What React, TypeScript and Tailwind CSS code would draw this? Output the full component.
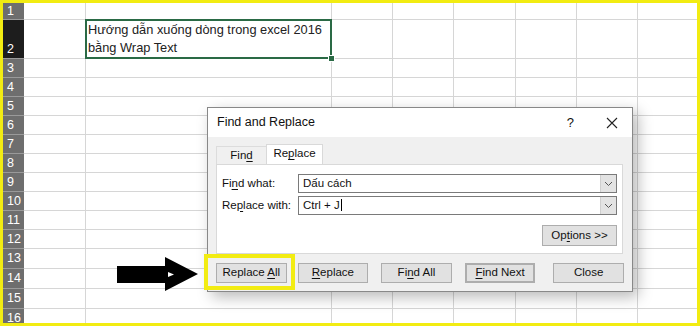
import React from "react";

const rows = [
  { n: 1, h: "h-[17px]" },
  { n: 2, h: "h-[39px]" },
  { n: 3, h: "h-[19px]" },
  { n: 4, h: "h-[19px]" },
  { n: 5, h: "h-[19px]" },
  { n: 6, h: "h-[19px]" },
  { n: 7, h: "h-[19px]" },
  { n: 8, h: "h-[19px]" },
  { n: 9, h: "h-[19px]" },
  { n: 10, h: "h-[19px]" },
  { n: 11, h: "h-[19px]" },
  { n: 12, h: "h-[19px]" },
  { n: 13, h: "h-[20px]" },
  { n: 14, h: "h-[20px]" },
  { n: 15, h: "h-[20px]" },
  { n: 16, h: "h-[20px]" },
];

const colWidths = ["w-[62px]", "w-[246px]", "w-[61px]", "w-[61px]", "w-[62px]", "w-[61px]", "w-[61px]", "w-[61px]"];

function U({ children }: { children: React.ReactNode }) {
  return <span className="underline underline-offset-2">{children}</span>;
}

function Chevron() {
  return (
    <svg width="9" height="6" viewBox="0 0 9 6" fill="none">
      <path d="M1 1l3.5 3.5L8 1" stroke="#555" strokeWidth="1" />
    </svg>
  );
}

function Btn({ children, className = "" }: { children: React.ReactNode; className?: string }) {
  return (
    <div
      className={`flex h-[20px] w-[71px] items-center justify-center border border-[#adadad] bg-[#e1e1e1] text-[11.5px] text-[#111] ${className}`}
    >
      <span className="whitespace-pre">{children}</span>
    </div>
  );
}

export default function App() {
  return (
    <div
      className="relative h-[326px] w-[700px] overflow-hidden border-[3px] border-[#f2ec12] bg-white"
      style={{ fontFamily: '"Liberation Sans", Arial, sans-serif' }}
    >
      {/* Sheet */}
      <div className="flex flex-col">
        {rows.map((r) => (
          <div key={r.n} className={`flex ${r.h}`}>
            <div
              className={`flex w-[21px] shrink-0 border-b border-[#9a9a9a] pl-[4px] text-[12.5px] leading-none text-white ${
                r.n === 2 ? "items-end bg-[#1d1d1d] pb-[3px]" : "items-center bg-[#6e6e6e]"
              }`}
            >
              {r.n}
            </div>
            {colWidths.map((w, i) => (
              <div key={i} className={`relative shrink-0 border-r border-b border-[#d6d6d6] ${w}`}>
                {r.n === 2 && i === 1 && (
                  <>
                    <div className="absolute inset-0 flex items-end whitespace-nowrap pb-[1px] pl-[2px] text-[12.8px] leading-[18px] text-[#222]">
                      <div>
                        Hướng dẫn xuống dòng trong excel 2016
                        <br />
                        bằng Wrap Text
                      </div>
                    </div>
                    <div className="absolute -top-[1px] -left-[1px] -right-[1px] -bottom-[1px] border-2 border-[#2a6a45]" />
                    <div className="absolute -right-[4px] -bottom-[4px] z-10 h-[7px] w-[7px] border border-white bg-[#2a6a45]" />
                  </>
                )}
              </div>
            ))}
          </div>
        ))}
      </div>

      {/* Find and Replace dialog */}
      <div className="absolute left-[204px] top-[104px] flex h-[185px] w-[426px] flex-col border border-[#888] bg-[#f0f0f0] text-[#111] shadow-[5px_5px_14px_rgba(0,0,0,0.28)]">
        <div className="flex h-[29px] items-center bg-white pl-[9px] pr-[14px] text-[12.5px]">
          <span>Find and Replace</span>
          <span className="ml-auto mr-[32px] text-[13px]">?</span>
          <svg width="12" height="12" viewBox="0 0 12 12">
            <path d="M1 1l10 10M11 1L1 11" stroke="#222" strokeWidth="1.1" />
          </svg>
        </div>

        <div className="flex flex-col px-[8px] pt-[7px]">
          {/* Tabs */}
          <div className="flex h-[20px] items-end text-[11.5px]">
            <div className="flex h-[18px] w-[50px] items-center justify-center border-t border-l border-[#dcdcdc]">
              <span>
                Fin<U>d</U>
              </span>
            </div>
            <div className="-mb-[1px] flex h-[21px] w-[57px] items-center justify-center border border-b-0 border-[#d9d9d9] bg-white pb-[2px]">
              <span>
                Re<U>p</U>lace
              </span>
            </div>
          </div>
          <div className="flex h-[90px] w-[407px] flex-col border border-[#d9d9d9] bg-white px-[5px] pt-[9px] text-[11.5px]">
            <div className="flex h-[19px] items-center">
              <span className="w-[76px] whitespace-pre">
                Fi<U>n</U>d what:
              </span>
              <div className="flex h-[19px] flex-1 items-center border border-[#7a7a7a] bg-white pl-[4px]">
                <span className="flex-1">Dấu cách</span>
                <div className="flex h-full w-[16px] items-center justify-center border-l border-[#cfcfcf] bg-[#e3e3e3]">
                  <Chevron />
                </div>
              </div>
            </div>
            <div className="mt-[3px] flex h-[19px] items-center">
              <span className="w-[76px] whitespace-pre">
                Re<U>p</U>lace with:
              </span>
              <div className="flex h-[19px] flex-1 items-center border border-[#7a7a7a] bg-white pl-[4px]">
                <span className="flex-1">
                  Ctrl + J<span className="ml-[1px] inline-block h-[12px] w-[1px] translate-y-[2px] bg-black" />
                </span>
                <div className="flex h-full w-[16px] items-center justify-center border-l border-[#cfcfcf] bg-[#e3e3e3]">
                  <Chevron />
                </div>
              </div>
            </div>
            <div className="mt-[10px] flex justify-end">
              <Btn className="h-[21px] w-[75px]">
                Op<U>t</U>ions &gt;&gt;
              </Btn>
            </div>
          </div>

          {/* Buttons */}
          <div className="mt-[9px] flex">
            <Btn>
              Replace <U>A</U>ll
            </Btn>
            <Btn className="ml-[11px]">
              <U>R</U>eplace
            </Btn>
            <Btn className="ml-[13px]">
              Fi<U>n</U>d All
            </Btn>
            <Btn className="ml-[13px] border-2 border-[#3c7fb8]">
              <U>F</U>ind Next
            </Btn>
            <Btn className="ml-[18px]">Close</Btn>
          </div>
        </div>
      </div>

      {/* Yellow highlight around Replace All */}
      <div className="absolute left-[201px] top-[251px] h-[36px] w-[91px] border-[4px] border-[#f2ec12]" />

      {/* Arrow */}
      <svg className="absolute left-[114px] top-[254px]" width="81" height="34" viewBox="0 0 81 34">
        <polygon points="0,9 48,9 48,0 81,17 48,34 48,26 0,26" fill="#000" />
        <polygon points="51,15 57,17.5 51,20" fill="#fff" />
      </svg>
    </div>
  );
}
